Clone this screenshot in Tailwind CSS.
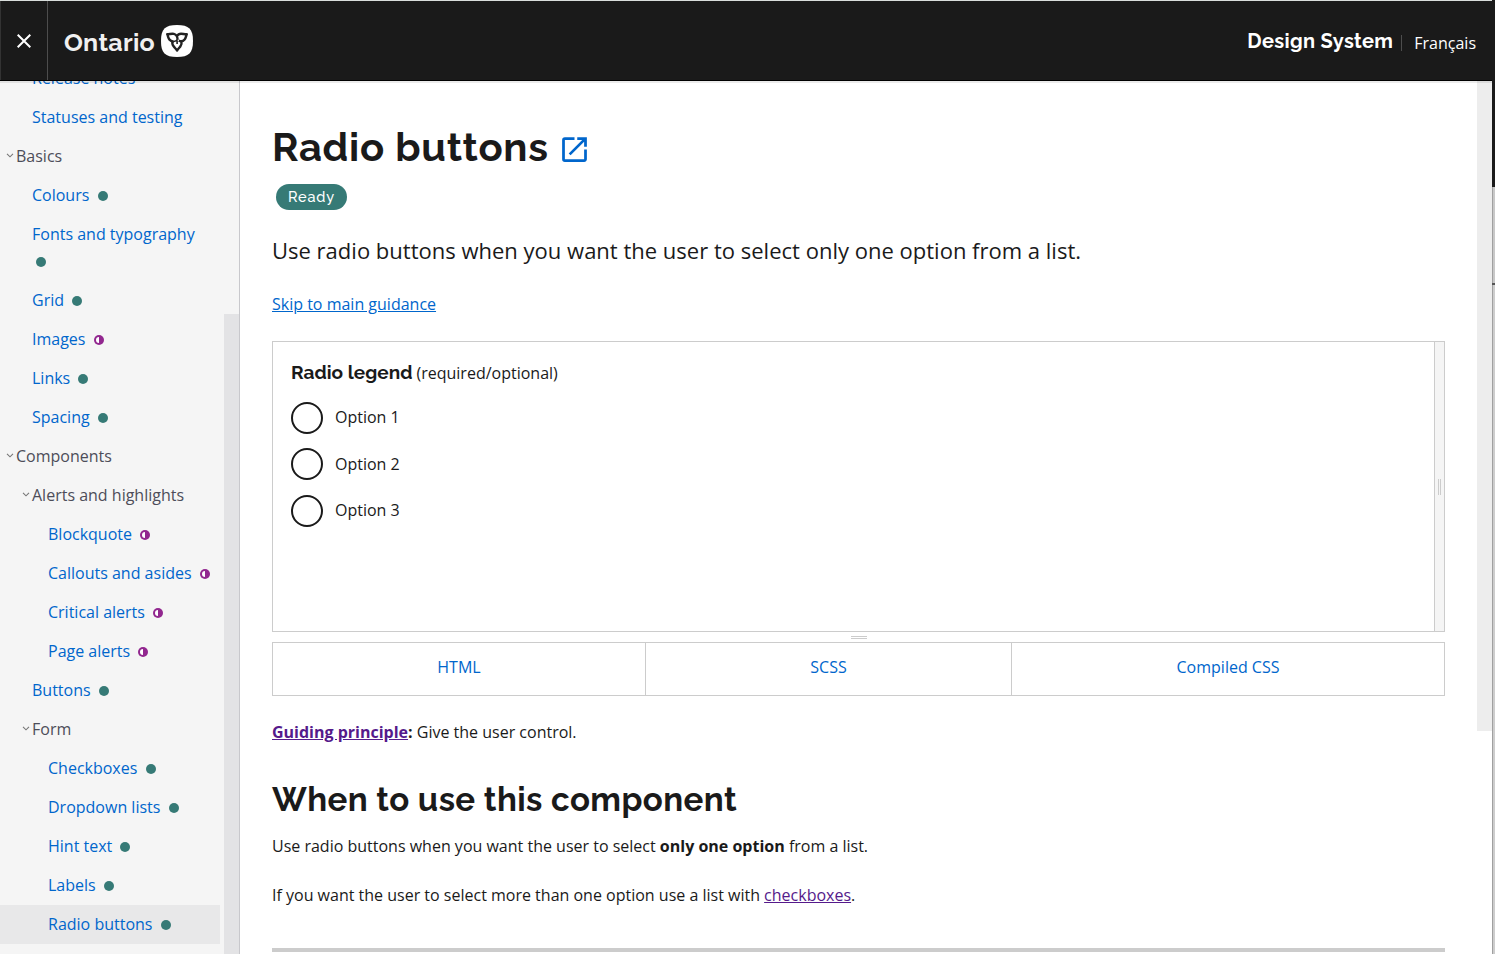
<!DOCTYPE html>
<html lang="en">
<head>
<meta charset="utf-8">
<title>Radio buttons - Ontario Design System</title>
<script src="https://cdn.jsdelivr.net/npm/@tailwindcss/browser@4"></script>
</head>
<body class="w-[1495px] h-[954px] overflow-hidden bg-white font-['Open_Sans',sans-serif] text-base text-[#1a1a1a] flex">
<svg class="hidden">
  <symbol id="ready" viewBox="0 0 10 10"><circle cx="5" cy="5" r="5" fill="#367a76"/></symbol>
  <symbol id="progress" viewBox="0 0 10 10"><circle cx="5" cy="5" r="5" fill="#92278f"/><path d="M5 2A3 3 0 0 0 5 8Z" fill="#fff"/></symbol>
  <symbol id="chev" viewBox="0 0 8 5"><path d="M1 .8 4 3.8 7 .8" fill="none" stroke="#777" stroke-width="1.1"/></symbol>
</svg>
<div class="w-[1492px] h-full flex flex-col shrink-0">
  <header class="h-[81px] shrink-0 relative z-10 shadow-[0_2px_0_rgba(0,0,0,0.08)] bg-[#1a1a1a] border-t border-t-[#d9dedc] border-b border-b-black flex text-white">
    <div class="w-12 shrink-0 border-l border-l-[#333] border-r border-r-[#4d4d4d] flex items-center justify-center">
      <svg class="w-[14px] h-[14px]" viewBox="0 0 14 14"><path d="M.7.7 13.3 13.3M13.3.7.7 13.3" stroke="#fff" stroke-width="2"/></svg>
    </div>
    <div class="flex pl-4 pt-6 grow">
      <span class="w-[97px] font-['Raleway',Lato,sans-serif] font-bold text-[25px] leading-[35px] tracking-[0.3px] text-[#f0f0f0]">Ontario</span>
      <svg class="w-8 h-8" viewBox="0 0 32 32"><path d="M16 0C28 0 32 4 32 16S28 32 16 32 0 28 0 16 4 0 16 0Z" fill="#fff"/>
        <g fill="none" stroke="#222" stroke-width="2.4" stroke-linejoin="round"><path d="M16.600 14.800C16.600 11.500 15.200 9.400 12.800 8.800 10.600 8.300 8.600 9.300 6.200 9.300 7.200 11.200 7.100 13 8.500 14.600 9.600 15.900 11 16.500 12.600 16.300"/><path d="M15.800 11.200C16.900 9.400 18.300 8.700 20 8.700 22 8.700 23.600 9.500 25.800 9.300 24.900 11.200 25 12.900 23.600 14.500 22.200 16.200 19.800 16.600 17.800 15.600"/><path d="M11.600 15.800C10.900 18 11.400 19.800 12.800 21.600 13.900 23 15.300 24 16 25.600 16.800 24 18.300 23 19.300 21.500 20.500 19.700 20.900 18 20.300 16.200"/></g><path d="M12.200 16.400C14 16.600 15.500 15.800 16.500 14.400M16.100 15.400V19" fill="none" stroke="#222" stroke-width="1.6"/></svg>
    </div>
    <div class="flex pr-4">
      <span class="font-['Raleway',Lato,sans-serif] font-bold text-[20px] leading-[26px] tracking-[0.35px] pt-[27px]">Design System</span>
      <span class="w-px h-4 bg-[#4d4d4d] mt-[34px] ml-2 mr-3"></span>
      <span class="pt-[30px] leading-6">Français</span>
    </div>
  </header>
  <div class="flex grow min-h-0">
    <nav class="w-60 shrink-0 bg-[#f5f5f5] border-r border-r-[#c8c8cc] flex text-[#0066cc] overflow-hidden">
      <div class="w-[220px] shrink-0 -mt-[22px] leading-[27px] *:h-[39px] *:pt-[6px] *:shrink-0 flex flex-col whitespace-nowrap">
        <div class="pl-8">Release notes</div>
        <div class="pl-8">Statuses and testing</div>
        <div class="pl-[6px] flex text-[#4d4d59]"><svg class="w-2 h-[5px] mt-[10px] mr-[2px]"><use href="#chev"/></svg>Basics</div>
        <div class="pl-8 flex gap-[8.5px]">Colours<svg class="w-[10px] h-[10px] mt-[9px]"><use href="#ready"/></svg></div>
        <div class="pl-8 h-[66px]!">Fonts and typography<svg class="w-[10px] h-[10px] mt-[9px] ml-1"><use href="#ready"/></svg></div>
        <div class="pl-8 flex gap-2">Grid<svg class="w-[10px] h-[10px] mt-[9px]"><use href="#ready"/></svg></div>
        <div class="pl-8 flex gap-[8.5px]">Images<svg class="w-[10px] h-[10px] mt-[9px]"><use href="#progress"/></svg></div>
        <div class="pl-8 flex gap-2">Links<svg class="w-[10px] h-[10px] mt-[9px]"><use href="#ready"/></svg></div>
        <div class="pl-8 flex gap-2">Spacing<svg class="w-[10px] h-[10px] mt-[9px]"><use href="#ready"/></svg></div>
        <div class="pl-[6px] flex text-[#4d4d59]"><svg class="w-2 h-[5px] mt-[10px] mr-[2px]"><use href="#chev"/></svg>Components</div>
        <div class="pl-[22px] flex text-[#4d4d59]"><svg class="w-2 h-[5px] mt-[10px] mr-[2px]"><use href="#chev"/></svg>Alerts and highlights</div>
        <div class="pl-12 flex gap-2">Blockquote<svg class="w-[10px] h-[10px] mt-[9px]"><use href="#progress"/></svg></div>
        <div class="pl-12 flex gap-2">Callouts and asides<svg class="w-[10px] h-[10px] mt-[9px]"><use href="#progress"/></svg></div>
        <div class="pl-12 flex gap-2">Critical alerts<svg class="w-[10px] h-[10px] mt-[9px]"><use href="#progress"/></svg></div>
        <div class="pl-12 flex gap-2">Page alerts<svg class="w-[10px] h-[10px] mt-[9px]"><use href="#progress"/></svg></div>
        <div class="pl-8 flex gap-2">Buttons<svg class="w-[10px] h-[10px] mt-[9px]"><use href="#ready"/></svg></div>
        <div class="pl-[22px] flex text-[#4d4d59]"><svg class="w-2 h-[5px] mt-[10px] mr-[2px]"><use href="#chev"/></svg>Form</div>
        <div class="pl-12 flex gap-[8.5px]">Checkboxes<svg class="w-[10px] h-[10px] mt-[9px]"><use href="#ready"/></svg></div>
        <div class="pl-12 flex gap-[8.5px]">Dropdown lists<svg class="w-[10px] h-[10px] mt-[9px]"><use href="#ready"/></svg></div>
        <div class="pl-12 flex gap-2">Hint text<svg class="w-[10px] h-[10px] mt-[9px]"><use href="#ready"/></svg></div>
        <div class="pl-12 flex gap-2">Labels<svg class="w-[10px] h-[10px] mt-[9px]"><use href="#ready"/></svg></div>
        <div class="pl-12 flex gap-[8.5px] bg-[#e8e8e9]">Radio buttons<svg class="w-[10px] h-[10px] mt-[9px]"><use href="#ready"/></svg></div>
      </div>
      <div class="w-[15px] ml-1 mt-[233px] bg-[#e3e3e5] shrink-0"></div>
    </nav>
    <main class="grow min-w-0 pl-8 pr-8 pt-[42px]">
      <div class="flex h-[61px]">
        <h1 class="font-['Raleway',Lato,sans-serif] font-bold text-[40px] leading-[48px] tracking-[0.7px]">Radio buttons</h1>
        <svg class="w-[33px] h-[33px] ml-[9.500px] mt-[9.500px]" viewBox="0 0 24 24" fill="#0066cc"><path d="M19 19H5V5h7V3H5a2 2 0 0 0-2 2v14a2 2 0 0 0 2 2h14c1.100 0 2-.9 2-2v-7h-2v7zM14 3v2h3.590l-9.830 9.830 1.410 1.410L19 6.410V10h2V3h-7z"/></svg>
      </div>
      <div class="w-[71px] h-[26px] rounded-full bg-[#367a76] ml-1 flex items-center pl-3 text-white font-['Raleway',Lato,sans-serif] font-medium text-[14.5px] tracking-[0.8px]">Ready</div>
      <p class="text-[22px] leading-9 mt-[22px] tracking-[0.007px]">Use radio buttons when you want the user to select only one option from a list.</p>
      <p class="leading-6 mt-6 h-[49px]"><a class="text-[#0066cc] underline">Skip to main guidance</a></p>
      <div class="w-[1173px] h-[291px] border border-[#ccc] flex">
        <div class="grow pl-[18px] pt-[17px]">
          <div class="flex leading-[26px] h-[43px] gap-1"><span class="font-['Raleway',Lato,sans-serif] font-bold text-[19px] tracking-[0.03px]">Radio legend</span><span class="pt-px">(required/optional)</span></div>
          <div class="flex gap-3 h-[46px] leading-[30px]"><span class="size-8 rounded-full border-2 border-[#1a1a1a]"></span>Option 1</div>
          <div class="flex gap-3 h-[47px] leading-8"><span class="size-8 rounded-full border-2 border-[#1a1a1a]"></span>Option 2</div>
          <div class="flex gap-3 h-[46px] leading-[30px]"><span class="size-8 rounded-full border-2 border-[#1a1a1a]"></span>Option 3</div>
        </div>
        <div class="w-[10px] bg-[#f5f5f5] border-l border-l-[#ccc] flex items-center justify-center"><span class="w-[3px] h-4 border-x border-[#ccc]"></span></div>
      </div>
      <div class="h-[10px] w-[1173px] flex items-center justify-center"><span class="w-4 h-[3px] border-y border-[#ccc]"></span></div>
      <div class="w-[1173px] h-[54px] border border-[#ccc] flex text-center text-[#0066cc] leading-[48px]">
        <div class="w-[373px] border-r border-r-[#ccc]">HTML</div><div class="w-[366px] border-r border-r-[#ccc]">SCSS</div><div class="grow">Compiled CSS</div>
      </div>
      <p class="mt-6 leading-6"><b><a class="underline text-[#551a8b]">Guiding principle</a>:</b> Give the user control.</p>
      <h2 class="font-['Raleway',Lato,sans-serif] font-bold text-[33px] leading-[42px] tracking-[0.4px] mt-[35px]">When to use this component</h2>
      <p class="mt-[13px] leading-6">Use radio buttons when you want the user to select <b>only one option</b> from a list.</p>
      <p class="mt-[25px] leading-6">If you want the user to select more than one option use a list with <a class="underline text-[#551a8b]">checkboxes</a>.</p>
      <div class="w-[1173px] h-1 bg-[#ccc] mt-[41px]"></div>
    </main>
    <div class="w-[15px] h-[650px] bg-[#ededed] shrink-0"></div>
  </div>
</div>
<div class="w-[3px] flex flex-col">
  <div class="h-[187px] bg-[#1a1a1a]"></div>
  <div class="h-[96px] bg-[#c8c8c8] border-l border-l-[#a0a0a0]"></div>
  <div class="h-[2px] bg-[#555]"></div>
  <div class="grow bg-[#cdcdcd] border-l border-l-[#a0a0a0]"></div>
</div>
</body>
</html>
